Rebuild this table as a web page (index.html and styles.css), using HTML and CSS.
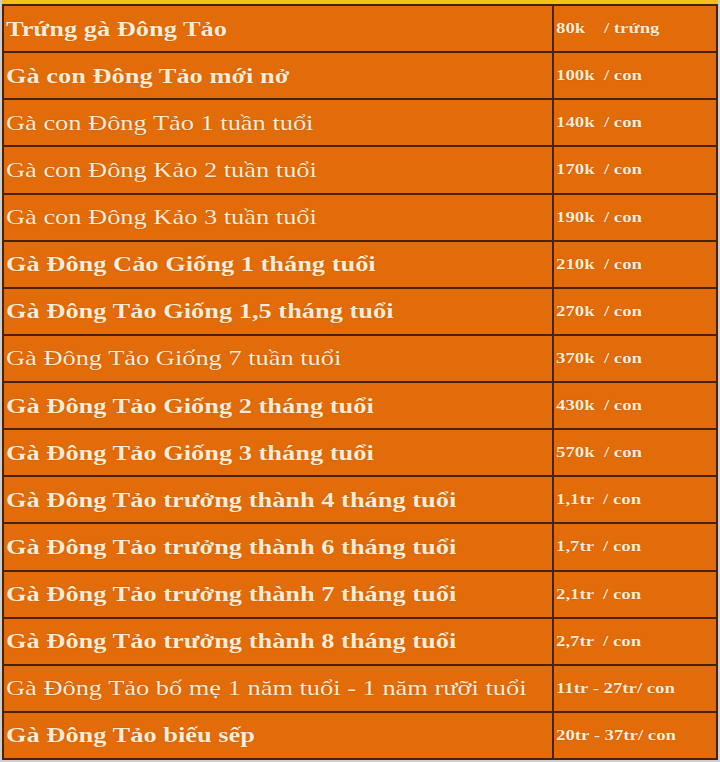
FILE: index.html
```html
<!DOCTYPE html>
<html lang="vi">
<head>
<meta charset="utf-8">
<title>Bảng giá gà Đông Tảo</title>
<link rel="stylesheet" href="styles.css">
</head>
<body>
<div class="page">
  <div class="topbar"></div>
  <table class="prices">
    <tr class="b"><td class="name"><span>Trứng gà Đông Tảo</span></td><td class="price"><span>80k    / trứng</span></td></tr>
    <tr class="b"><td class="name"><span>Gà con Đông Tảo mới nở</span></td><td class="price"><span>100k  / con</span></td></tr>
    <tr><td class="name"><span>Gà con Đông Tảo 1 tuần tuổi</span></td><td class="price"><span>140k  / con</span></td></tr>
    <tr><td class="name"><span>Gà con Đông Kảo 2 tuần tuổi</span></td><td class="price"><span>170k  / con</span></td></tr>
    <tr><td class="name"><span>Gà con Đông Kảo 3 tuần tuổi</span></td><td class="price"><span>190k  / con</span></td></tr>
    <tr class="b"><td class="name"><span>Gà Đông Cảo Giống 1 tháng tuổi</span></td><td class="price"><span>210k  / con</span></td></tr>
    <tr class="b"><td class="name"><span>Gà Đông Tảo Giống 1,5 tháng tuổi</span></td><td class="price"><span>270k  / con</span></td></tr>
    <tr><td class="name"><span>Gà Đông Tảo Giống 7 tuần tuổi</span></td><td class="price"><span>370k  / con</span></td></tr>
    <tr class="b"><td class="name"><span>Gà Đông Tảo Giống 2 tháng tuổi</span></td><td class="price"><span>430k  / con</span></td></tr>
    <tr class="b"><td class="name"><span>Gà Đông Tảo Giống 3 tháng tuổi</span></td><td class="price"><span>570k  / con</span></td></tr>
    <tr class="b"><td class="name"><span>Gà Đông Tảo trưởng thành 4 tháng tuổi</span></td><td class="price"><span>1,1tr  / con</span></td></tr>
    <tr class="b"><td class="name"><span>Gà Đông Tảo trưởng thành 6 tháng tuổi</span></td><td class="price"><span>1,7tr  / con</span></td></tr>
    <tr class="b"><td class="name"><span>Gà Đông Tảo trưởng thành 7 tháng tuổi</span></td><td class="price"><span>2,1tr  / con</span></td></tr>
    <tr class="b"><td class="name"><span>Gà Đông Tảo trưởng thành 8 tháng tuổi</span></td><td class="price"><span>2,7tr  / con</span></td></tr>
    <tr><td class="name"><span>Gà Đông Tảo bố mẹ 1 năm tuổi - 1 năm rưỡi tuổi</span></td><td class="price"><span>11tr - 27tr/ con</span></td></tr>
    <tr class="b"><td class="name"><span>Gà Đông Tảo biếu sếp</span></td><td class="price"><span>20tr - 37tr/ con</span></td></tr>
  </table>
</div>
</body>
</html>
```

FILE: styles.css
```css
html, body {
  margin: 0;
  padding: 0;
  background: #d6d6d6;
}

.page {
  width: 720px;
  height: 762px;
  overflow: hidden;
  background: #cfcfcf;
}

.topbar {
  height: 4px;
  margin-left: 2px;
  margin-right: 2px;
  background: #f2c40f;
}

.prices {
  margin-left: 2px;
  width: 716px;
  border-collapse: collapse;
  background: #e36c0a;
  border: 2px solid #4a2208;
  table-layout: fixed;
}

.prices td {
  height: 45.14px;
  padding: 0;
  border: 2px solid #4a2208;
  color: #fdebd3;
  font-family: "Liberation Serif", "Times New Roman", serif;
  vertical-align: middle;
  text-shadow: 0 0 1px rgba(90, 40, 0, 0.5);
}

.prices td span {
  display: inline-block;
  transform-origin: left center;
}

.prices .name {
  width: 546px;
  padding-left: 2px;
  font-size: 22px;
  white-space: nowrap;
}

.prices .name span {
  transform: scaleX(1.2);
}

.prices .price {
  padding-left: 2px;
  font-size: 15px;
  font-weight: bold;
  white-space: pre;
}

.prices .price span {
  transform: scaleX(1.25);
}

.prices tr.b .name {
  font-weight: bold;
}
```
